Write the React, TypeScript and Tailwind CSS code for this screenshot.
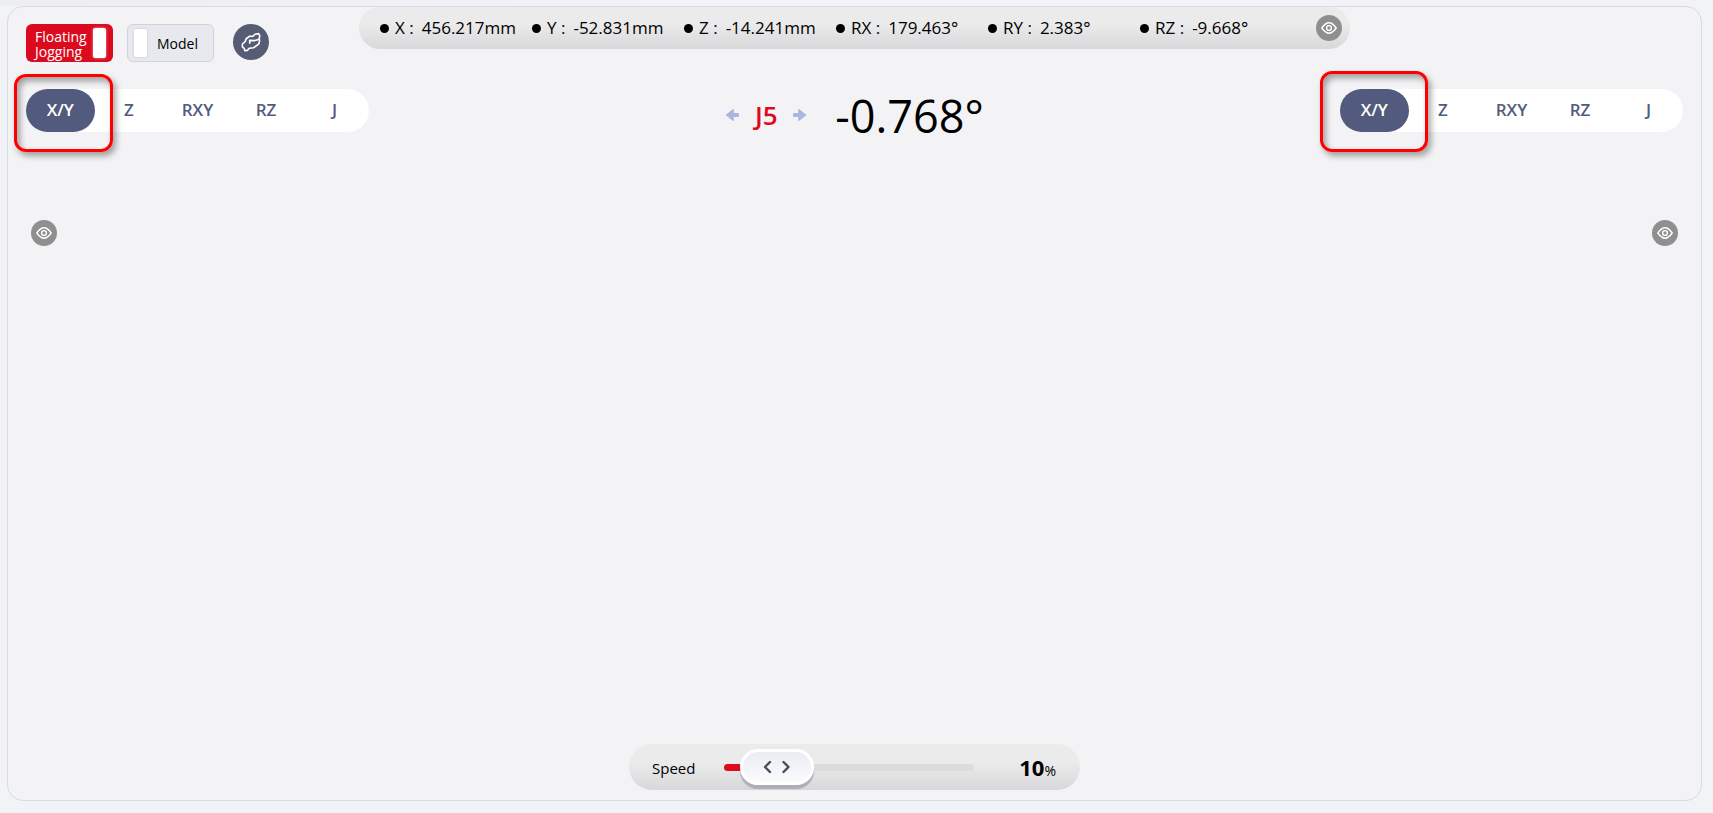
import { useState } from 'react'
import clsx from 'clsx'

const MODES = ['X/Y', 'Z', 'RXY', 'RZ', 'J']

const POSE = [
  { axis: 'X', value: '456.217mm' },
  { axis: 'Y', value: '-52.831mm' },
  { axis: 'Z', value: '-14.241mm' },
  { axis: 'RX', value: '179.463°' },
  { axis: 'RY', value: '2.383°' },
  { axis: 'RZ', value: '-9.668°' },
]

function EyeButton({ label }: { label: string }) {
  return (
    <button
      type="button"
      aria-label={label}
      className="size-[26px] shrink-0 rounded-full bg-[#8f8f8f] text-white flex items-center justify-center"
    >
      <svg viewBox="0 0 16 12" className="w-4 h-3" fill="none" stroke="currentColor" strokeWidth="1.4">
        <path d="M0.8 6 C3 3 5 0.8 8 0.8 S13 3 15.2 6 C13 9 11 11.2 8 11.2 S3 9 0.8 6 Z" />
        <circle cx="8" cy="6" r="2.4" />
      </svg>
    </button>
  )
}

function ModeTabs({ label, markClass }: { label: string; markClass: string }) {
  const [mode, setMode] = useState('X/Y')

  return (
    <div role="group" aria-label={label} className="relative flex w-[343px] h-[43px] rounded-full bg-white">
      {MODES.map((m) => (
        <button
          key={m}
          type="button"
          aria-pressed={m === mode}
          onClick={() => setMode(m)}
          className={clsx(
            'flex-1 pb-0.5 rounded-full text-[17px] leading-6 font-semibold',
            m === mode ? 'bg-[#525a7e] text-white' : 'text-[#525a7e]'
          )}
        >
          {m}
        </button>
      ))}
      {/* red frame around the first mode */}
      <div
        className={clsx(
          'absolute pointer-events-none rounded-xl border-3 border-[#fe0000] shadow-[3px_4px_6px_rgba(0,0,0,0.35),inset_3px_4px_6px_rgba(0,0,0,0.35)]',
          markClass
        )}
      />
    </div>
  )
}

function JointArrow({ flip }: { flip?: boolean }) {
  return (
    <svg viewBox="0 0 14 14" className={clsx('size-3.5', flip && 'rotate-180')} fill="#a9b7dc">
      <path d="M0.5 7 L8 1 Q8.8 0.6 8.8 1.6 V5 H13 Q14 5 14 6 V8 Q14 9 13 9 H8.8 V12.4 Q8.8 13.4 8 13 Z" />
    </svg>
  )
}

function SpeedSlider() {
  const [speed, setSpeed] = useState(10)
  const ratio = (speed - 1) / 99

  return (
    <div className="flex items-center w-[451px] h-[46px] pl-[23px] pr-6 rounded-full bg-linear-to-b from-[#ebebec] from-40% to-[#d8d8da]">
      <label htmlFor="speed" className="w-[72px] pt-0.5 text-[15px] leading-6">
        Speed
      </label>
      <div className="relative flex items-center w-[250px] h-9">
        <input
          id="speed"
          type="range"
          min={1}
          max={100}
          value={speed}
          onChange={(e) => setSpeed(Number(e.target.value))}
          style={{
            backgroundImage: `linear-gradient(to right, #dc0a1e ${speed}%, #dcdcde ${speed}%)`,
          }}
          className="w-full h-[7px] rounded-full appearance-none cursor-pointer [&::-webkit-slider-thumb]:appearance-none [&::-webkit-slider-thumb]:w-[74px] [&::-webkit-slider-thumb]:h-9 [&::-webkit-slider-thumb]:rounded-full [&::-webkit-slider-thumb]:border-3 [&::-webkit-slider-thumb]:border-white [&::-webkit-slider-thumb]:bg-linear-to-b [&::-webkit-slider-thumb]:from-[#e9ecf3] [&::-webkit-slider-thumb]:to-[#fbfbfd] [&::-webkit-slider-thumb]:shadow-[0_4px_1px_rgba(90,95,115,0.35)]"
        />
        <svg
          viewBox="0 0 74 36"
          style={{ left: `calc((100% - 74px) * ${ratio})` }}
          className="absolute top-0 w-[74px] h-9 pointer-events-none"
          fill="none"
          stroke="#474b5a"
          strokeWidth="2.4"
          strokeLinecap="round"
          strokeLinejoin="round"
        >
          <path d="M30 13 L25 18 L30 23 M43.500 13 L48.500 18 L43.500 23" />
        </svg>
      </div>
      <output htmlFor="speed" className="flex-1 pt-0.5 text-right text-[22px] leading-6 font-bold">
        {speed}
        <span className="text-sm font-normal">%</span>
      </output>
    </div>
  )
}

export default function App() {
  const [floating, setFloating] = useState(true)
  const [model, setModel] = useState(false)

  return (
    <div className="min-h-screen flex flex-col bg-[#f2f3f6] pl-[7px] pr-[11px] pb-3 text-black font-['Open_Sans','Noto_Sans',sans-serif]">
      <div className="h-1.5 -ml-[7px] w-2/5 bg-linear-to-r from-[#edeef0] to-[#f2f3f6]" />
      <main className="flex-1 flex flex-col rounded-2xl border border-[#d6dbe4] bg-[#f3f3f5]">
        <header className="grid grid-cols-[1fr_991px_1fr] items-start">
          <div className="flex items-start pl-[18px] pt-[17px]">
            <button
              type="button"
              role="switch"
              aria-checked={floating}
              onClick={() => setFloating(!floating)}
              className="flex items-center justify-between w-[87px] h-[38px] pl-[9px] pr-[7px] rounded-md bg-[#dc0a1e] text-white text-left text-sm leading-[15px]"
            >
              <span className="pt-0.5">
                Floating
                <br />
                Jogging
              </span>
              <span className="w-[13px] h-[30px] shrink-0 rounded-xs bg-white shadow-[0_0_3px_rgba(255,255,255,0.6)]" />
            </button>
            <button
              type="button"
              role="switch"
              aria-checked={model}
              onClick={() => setModel(!model)}
              className="flex items-center gap-2.5 w-[87px] h-[38px] ml-3.5 pl-1.5 rounded-md border border-[#cfd3dc] bg-[#e7e9ef] text-sm"
            >
              <span className="w-[13px] h-7 rounded-xs bg-white shadow-[0_0_3px_rgba(0,0,0,0.15)]" />
              <span className="pt-0.5">Model</span>
            </button>
            <button
              type="button"
              aria-label="Robot view"
              className="size-9 ml-[19px] rounded-full bg-[#555c74] flex items-center justify-center"
            >
              <svg
                viewBox="0 0 20 20"
                className="size-5"
                fill="none"
                stroke="white"
                strokeWidth="1.6"
                strokeLinejoin="round"
                strokeLinecap="round"
              >
                <path d="M17.600 1.600 L14 2.200 L12 4.300 L8.300 4.400 L5 7 L4.400 9.300 L1.400 12 L1.400 15 L3.200 16.300 L3.800 18.600 L6.300 18.400 L8.300 16.200 L12.500 15.800 L15 14 L17.600 12.200 L18.600 9 L18.200 6.500 L18.800 3.600 Z" />
                <path d="M17.800 7.400 L13.800 8.600 L8.600 8.400 L8.800 11.200" />
              </svg>
            </button>
          </div>

          <div className="flex items-center h-[42px] pl-[21px] pr-2 rounded-full bg-linear-to-b from-[#ebebec] from-40% to-[#d8d8da]">
            <dl className="flex flex-1">
              {POSE.map(({ axis, value }) => (
                <div key={axis} className="flex items-center w-[152px] text-[17px] leading-6">
                  <span className="size-[9px] mr-1.5 rounded-full bg-black" />
                  <dt className="mr-2">{axis} :</dt>
                  <dd>{value}</dd>
                </div>
              ))}
            </dl>
            <EyeButton label="Toggle pose readout" />
          </div>
        </header>

        <div className="flex items-start justify-between px-[18px] pt-[27px]">
          <ModeTabs label="Left jog mode" markClass="-top-[15px] -left-3 w-[99px] h-[78px]" />
          <div className="flex items-center h-[52px]">
            <button type="button" aria-label="Previous joint">
              <JointArrow />
            </button>
            <span className="w-[54px] text-center text-[26px] font-semibold text-[#dc0a1e]">J5</span>
            <button type="button" aria-label="Next joint">
              <JointArrow flip />
            </button>
            <span className="ml-7 text-[45px] leading-none">-0.768°</span>
          </div>
          <ModeTabs label="Right jog mode" markClass="-top-[18px] -left-5 w-[108px] h-[81px]" />
        </div>

        <div className="flex justify-between px-[23px] pt-[79px]">
          <EyeButton label="Toggle left joystick" />
          <EyeButton label="Toggle right joystick" />
        </div>

        <footer className="flex justify-center mt-auto pb-2.5">
          <SpeedSlider />
        </footer>
      </main>
    </div>
  )
}
